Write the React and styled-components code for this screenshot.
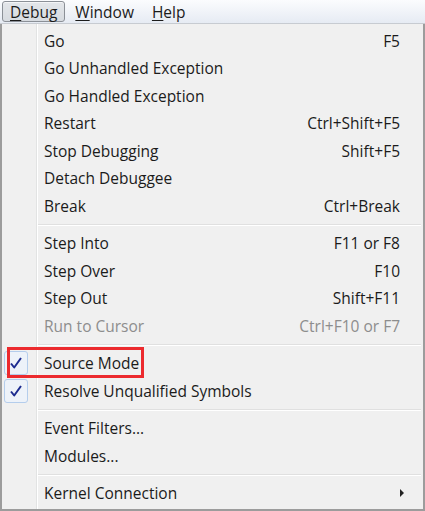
import styled, { createGlobalStyle } from "styled-components";

const GlobalStyle = createGlobalStyle`
  html, body {
    margin: 0;
    padding: 0;
    background: #f0f0f0;
  }
  body {
    font-family: "Open Sans", "Noto Sans", sans-serif;
    width: 425px;
    height: 511px;
    overflow: hidden;
  }
`;

const menuBar = [
  { key: "D", rest: "ebug", active: true },
  { key: "W", rest: "indow" },
  { key: "H", rest: "elp" },
];

const groups = [
  [
    { label: "Go", shortcut: "F5" },
    { label: "Go Unhandled Exception" },
    { label: "Go Handled Exception" },
    { label: "Restart", shortcut: "Ctrl+Shift+F5" },
    { label: "Stop Debugging", shortcut: "Shift+F5" },
    { label: "Detach Debuggee" },
    { label: "Break", shortcut: "Ctrl+Break" },
  ],
  [
    { label: "Step Into", shortcut: "F11 or F8" },
    { label: "Step Over", shortcut: "F10" },
    { label: "Step Out", shortcut: "Shift+F11" },
    { label: "Run to Cursor", shortcut: "Ctrl+F10 or F7", disabled: true },
  ],
  [
    { label: "Source Mode", checked: true, highlight: true },
    { label: "Resolve Unqualified Symbols", checked: true },
  ],
  [{ label: "Event Filters..." }, { label: "Modules..." }],
  [{ label: "Kernel Connection", submenu: true }],
];

const App = () => {
  return (
    <>
      <GlobalStyle />
      <Window>
        <MenuBar>
          {menuBar.map((m) => (
            <BarItem key={m.key} $active={m.active}>
              <u>{m.key}</u>
              {m.rest}
            </BarItem>
          ))}
        </MenuBar>
        <Menu>
          {groups.map((g, gi) => (
            <Group key={gi}>
              {gi > 0 && <Separator />}
              {g.map((item) => (
                <Row key={item.label} $disabled={item.disabled}>
                  <Gutter>
                    {item.checked && (
                      <CheckBox>
                        <svg width="14" height="14" viewBox="0 0 14 14">
                          <path
                            d="M2 7.5 L5.2 11.5 L12 2"
                            fill="none"
                            stroke="#1c2b8f"
                            strokeWidth="2"
                            strokeLinejoin="round"
                          />
                        </svg>
                      </CheckBox>
                    )}
                  </Gutter>
                  <Label>{item.label}</Label>
                  <Shortcut>
                    {item.shortcut}
                    {item.submenu && <Arrow />}
                  </Shortcut>
                  {item.highlight && <Highlight />}
                </Row>
              ))}
            </Group>
          ))}
        </Menu>
      </Window>
    </>
  );
};

const Window = styled.div`
  display: flex;
  flex-direction: column;
  width: 425px;
  height: 511px;
  color: #1b1b1b;
  font-size: 15.5px;
`;

const MenuBar = styled.div`
  height: 24px;
  display: flex;
  align-items: center;
  gap: 2px;
  padding-left: 2px;
  background: linear-gradient(#fbfcfe, #e6ebf3);
  border-bottom: 1px solid #c7cbd1;
`;

const BarItem = styled.div`
  height: 21px;
  display: flex;
  align-items: center;
  padding: 0 7px;
  box-sizing: border-box;
  border: 1px solid ${(p) => (p.$active ? "#8b9097" : "transparent")};
  border-radius: 3px;
  background: ${(p) =>
    p.$active ? "linear-gradient(#e3e6ea, #d7dbe0)" : "transparent"};
  box-shadow: ${(p) => (p.$active ? "inset 0 1px 0 #f4f5f7" : "none")};
  u {
    text-decoration-thickness: 1px;
    text-underline-offset: 2px;
  }
`;

const Menu = styled.div`
  flex: 1;
  display: flex;
  flex-direction: column;
  padding: 3px 0 2px;
  border-left: 2px solid #9c9c9c;
  border-right: 2px solid #9c9c9c;
  border-bottom: 2px solid #9c9c9c;
  background: linear-gradient(
    to right,
    #f0f0f0 34px,
    #e2e3e3 34px,
    #e2e3e3 35px,
    #ffffff 35px,
    #ffffff 36px,
    #f0f0f0 36px
  );
`;

const Group = styled.div`
  display: flex;
  flex-direction: column;
`;

const Separator = styled.div`
  height: 2px;
  margin: 4px 2px 4px 36px;
  border-top: 1px solid #e0e0e0;
  border-bottom: 1px solid #ffffff;
  box-sizing: border-box;
`;

const Row = styled.div`
  position: relative;
  height: 27.5px;
  display: grid;
  grid-template-columns: 34px 1fr auto;
  align-items: center;
  color: ${(p) => (p.$disabled ? "#8d8d8d" : "#1b1b1b")};
`;

const Gutter = styled.div`
  height: 100%;
  display: flex;
  align-items: center;
  padding-left: 2px;
`;

const CheckBox = styled.div`
  width: 24px;
  height: 24px;
  box-sizing: border-box;
  border: 1px solid #b4cdec;
  border-radius: 3px;
  background: #edf2f9;
  display: flex;
  align-items: center;
  justify-content: center;
`;

const Label = styled.span`
  padding-left: 8px;
  white-space: nowrap;
`;

const Shortcut = styled.span`
  padding-right: 23px;
  white-space: nowrap;
  display: flex;
  align-items: center;
`;

const Arrow = styled.span`
  width: 0;
  height: 0;
  border-top: 4px solid transparent;
  border-bottom: 4px solid transparent;
  border-left: 4px solid #222;
  margin-right: -10px;
`;

const Highlight = styled.div`
  position: absolute;
  left: 5px;
  top: -3px;
  width: 137px;
  height: 31px;
  box-sizing: border-box;
  border: 3px solid #ec2a2e;
  pointer-events: none;
`;

export default App;
